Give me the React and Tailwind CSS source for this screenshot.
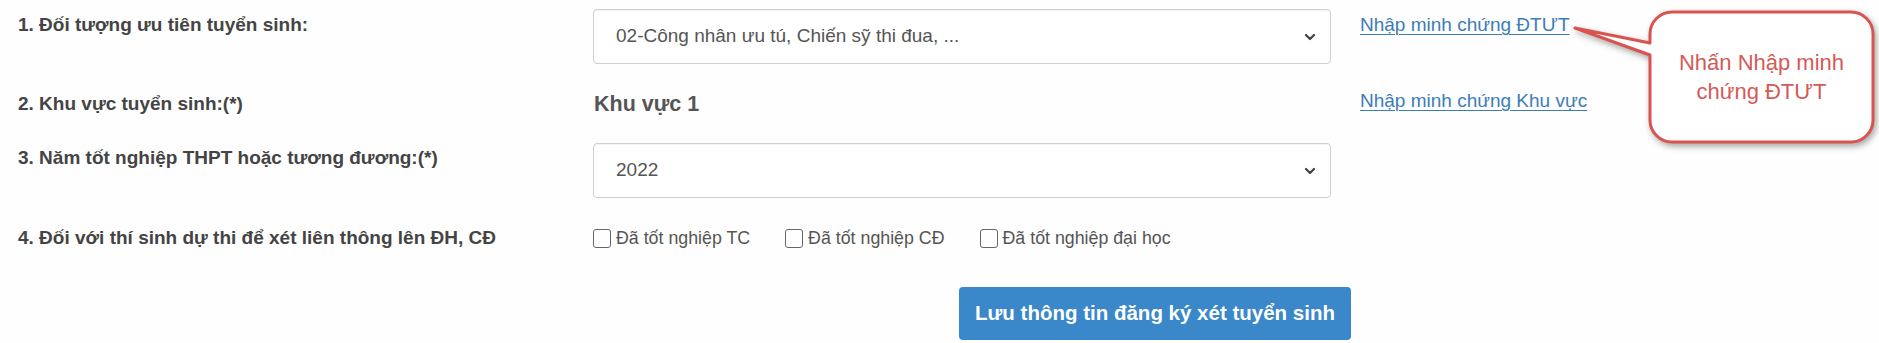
import React from 'react';
import { ChevronDown } from 'lucide-react';

const labelCls = 'text-[19px] font-bold text-[#444] leading-[26px]';
const linkCls = 'text-[19px] text-[#3d7db6] underline underline-offset-[3px] decoration-1 leading-[26px] whitespace-nowrap';

const SelectBox = ({ value }) => (
  <div className="h-[55px] w-full border border-[#cfcfcf] rounded-[4px] bg-white flex items-center justify-between pl-[22px] pr-[12px] shadow-[inset_0_1px_1px_rgba(0,0,0,0.05)]">
    <span className="text-[19px] text-[#555]">{value}</span>
    <ChevronDown size={16} strokeWidth={3.4} className="text-[#444]" />
  </div>
);

const Check = ({ label }) => (
  <label className="flex items-center gap-[5px] text-[17.8px] text-[#555] whitespace-nowrap">
    <span className="w-[18px] h-[19px] border-[1.5px] border-[#666] rounded-[3px] bg-white" />
    {label}
  </label>
);

const Callout = () => (
  <div className="absolute left-[1570px] top-0 w-[309px] h-[150px]">
    <svg width="309" height="150" viewBox="0 0 309 150" className="absolute inset-0 drop-shadow-[2px_3px_3px_rgba(0,0,0,0.35)]">
      <path
        d="M 102 12 H 281 A 22 22 0 0 1 303 34 V 120 A 22 22 0 0 1 281 142 H 102 A 22 22 0 0 1 80 120 V 55 L 5 28 L 80 43 V 34 A 22 22 0 0 1 102 12 Z"
        fill="#fff"
        stroke="#d9534f"
        strokeWidth="3"
        strokeLinejoin="round"
      />
    </svg>
    <div className="absolute left-[80px] top-[12px] w-[223px] h-[130px] flex items-center justify-center text-center text-[22px] leading-[29px] text-[#d45a57]">
      Nhấn Nhập minh<br />chứng ĐTƯT
    </div>
  </div>
);

export default function App() {
  return (
    <div className="relative w-full h-[343px] bg-[#fefefe] font-['Liberation_Sans',Arial,sans-serif] overflow-hidden">
      <div className="flex flex-col pl-[18px]">
        {/* row 1 */}
        <div className="grid grid-cols-[575px_738px_auto] items-start mt-[9px] h-[55px]">
          <div className={`${labelCls} pt-[3px]`}>1. Đối tượng ưu tiên tuyển sinh:</div>
          <SelectBox value="02-Công nhân ưu tú, Chiến sỹ thi đua, ..." />
          <div className="pl-[29px] pt-[3px]">
            <a href="#" className={linkCls}>Nhập minh chứng ĐTƯT</a>
          </div>
        </div>

        {/* row 2 */}
        <div className="grid grid-cols-[575px_738px_auto] items-center h-[79px]">
          <div className={labelCls}>2. Khu vực tuyển sinh:(*)</div>
          <div className="text-[21.5px] font-bold text-[#555] leading-[26px] pl-[1px]">Khu vực 1</div>
          <div className="pl-[29px] -mt-[6px]">
            <a href="#" className={linkCls}>Nhập minh chứng Khu vực</a>
          </div>
        </div>

        {/* row 3 */}
        <div className="grid grid-cols-[575px_738px_auto] items-start h-[56px]">
          <div className={`${labelCls} pt-[2px]`}>3. Năm tốt nghiệp THPT hoặc tương đương:(*)</div>
          <SelectBox value="2022" />
          <div />
        </div>

        {/* row 4 */}
        <div className="grid grid-cols-[575px_738px_auto] items-center mt-[20px] h-[38px]">
          <div className={labelCls}>4. Đối với thí sinh dự thi để xét liên thông lên ĐH, CĐ</div>
          <div className="flex items-center gap-[35px]">
            <Check label="Đã tốt nghiệp TC" />
            <Check label="Đã tốt nghiệp CĐ" />
            <Check label="Đã tốt nghiệp đại học" />
          </div>
          <div />
        </div>

        {/* submit */}
        <div className="flex mt-[30px] pl-[941px]">
          <button className="h-[53px] px-[16px] rounded-[4px] bg-[#3a87c9] text-white text-[20.5px] font-bold whitespace-nowrap">
            Lưu thông tin đăng ký xét tuyển sinh
          </button>
        </div>
      </div>

      <Callout />
    </div>
  );
}
